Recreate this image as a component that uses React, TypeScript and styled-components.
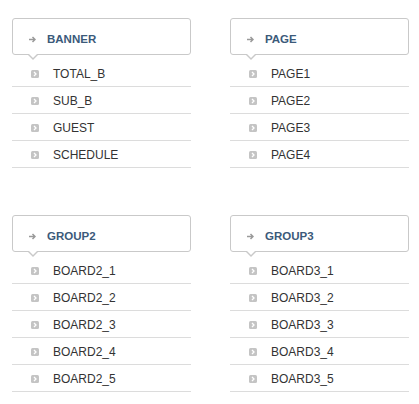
import React from "react";
import styled, { createGlobalStyle } from "styled-components";

const Global = createGlobalStyle`
  html, body { margin: 0; padding: 0; background: #fff; }
  body { font-family: "Liberation Sans", Arial, sans-serif; }
`;

const Page = styled.div`
  display: grid;
  grid-template-columns: 179px 179px;
  column-gap: 39px;
  row-gap: 47px;
  padding: 18px 0 0 12px;
`;

const Section = styled.section`
  display: flex;
  flex-direction: column;
`;

const Header = styled.div`
  position: relative;
  box-sizing: border-box;
  height: 37px;
  border: 1px solid #c9c9c9;
  border-radius: 3px;
  background: #fff;
  display: flex;
  align-items: center;
  padding: 6px 0 0 16px;
  margin-bottom: 5px;

  &::before,
  &::after {
    content: "";
    position: absolute;
    width: 0;
    height: 0;
    border-style: solid;
    border-color: transparent;
  }
  &::before {
    left: 15px;
    bottom: -6px;
    border-width: 5px 5px 0 5px;
    border-top-color: #c9c9c9;
  }
  &::after {
    left: 16px;
    bottom: -4px;
    border-width: 4px 4px 0 4px;
    border-top-color: #fff;
  }
`;

const Title = styled.h2`
  margin: 0 0 0 11px;
  font-size: 11.5px;
  font-weight: bold;
  color: #3b5a7a;
  line-height: 1;
`;

const List = styled.ul`
  list-style: none;
  margin: 0;
  padding: 0;
`;

const Item = styled.li`
  box-sizing: border-box;
  height: 27px;
  border-bottom: 1px solid #dcdcdc;
  display: flex;
  align-items: center;
  padding: 1px 0 0 19px;
  font-size: 12px;
  color: #333;
`;

const Label = styled.span`
  margin-left: 14px;
`;

const Arrow = () => (
  <svg width="7" height="7" viewBox="0 0 7 7" style={{ display: "block" }}>
    <path d="M0 3.5H6M3.5 1L6 3.5L3.5 6" stroke="#9a9a9a" strokeWidth="1.5" fill="none" />
  </svg>
);

const Bullet = () => (
  <svg width="8" height="8" viewBox="0 0 8 8" style={{ display: "block" }}>
    <rect x="0" y="0" width="8" height="8" rx="1.5" fill="#c4c4c4" />
    <path d="M3 2L5 4L3 6" stroke="#fff" strokeWidth="1.3" fill="none" />
  </svg>
);

const sections = [
  { title: "BANNER", items: ["TOTAL_B", "SUB_B", "GUEST", "SCHEDULE"] },
  { title: "PAGE", items: ["PAGE1", "PAGE2", "PAGE3", "PAGE4"] },
  { title: "GROUP2", items: ["BOARD2_1", "BOARD2_2", "BOARD2_3", "BOARD2_4", "BOARD2_5"] },
  { title: "GROUP3", items: ["BOARD3_1", "BOARD3_2", "BOARD3_3", "BOARD3_4", "BOARD3_5"] },
];

export default function App() {
  return (
    <>
      <Global />
      <Page>
        {sections.map((s) => (
          <Section key={s.title}>
            <Header>
              <Arrow />
              <Title>{s.title}</Title>
            </Header>
            <List>
              {s.items.map((it) => (
                <Item key={it}>
                  <Bullet />
                  <Label>{it}</Label>
                </Item>
              ))}
            </List>
          </Section>
        ))}
      </Page>
    </>
  );
}
